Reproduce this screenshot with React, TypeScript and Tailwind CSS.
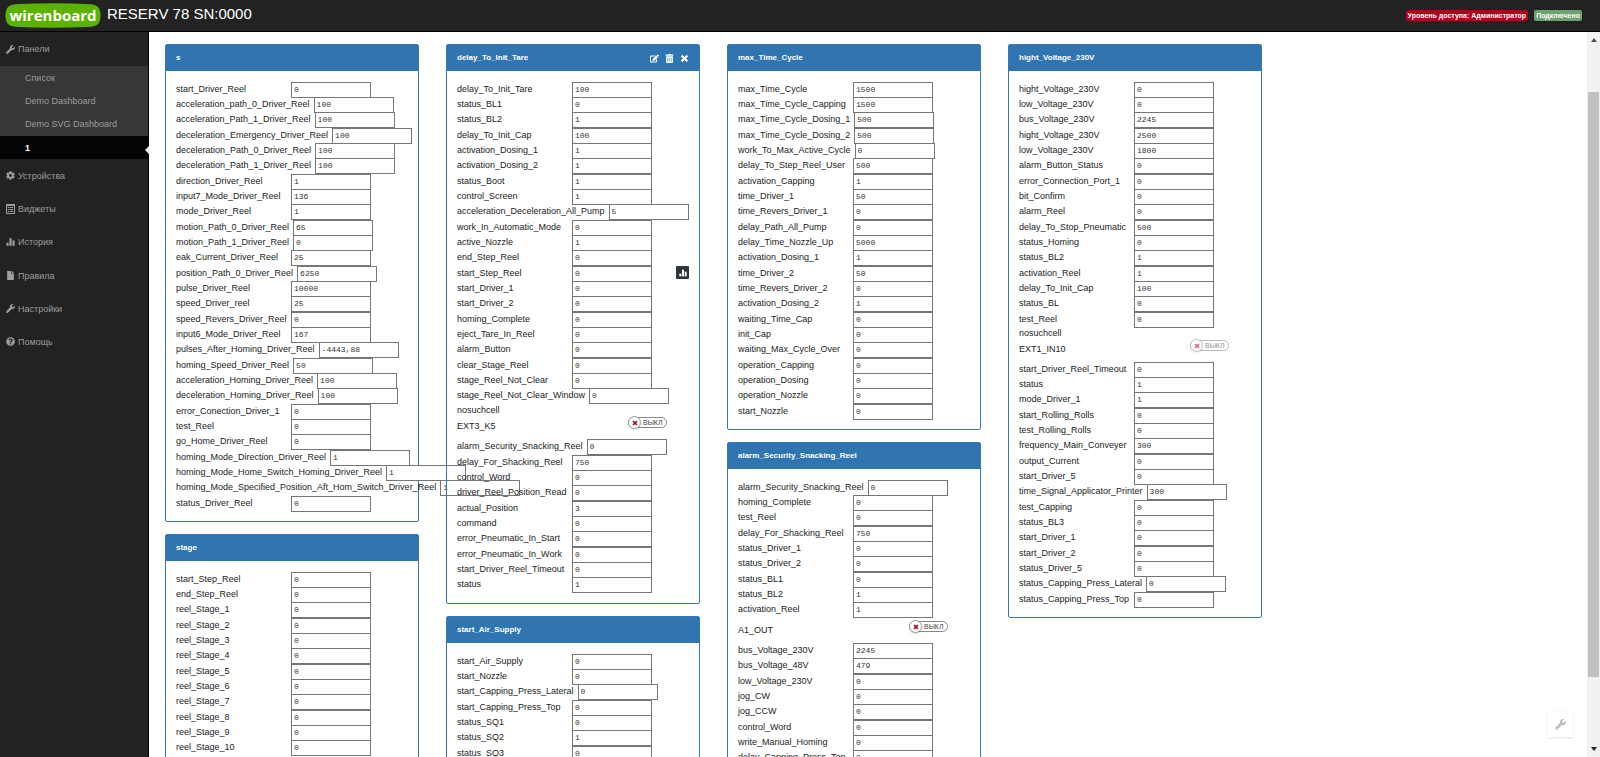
import React from 'react';
import {
  FaCog,
  FaEdit,
  FaFile,
  FaQuestionCircle,
  FaTimes,
  FaTrashAlt,
  FaWrench,
} from 'react-icons/fa';
import clsx from 'clsx';

type Cell =
  | { kind: 'value'; name: string; value: string; history?: boolean }
  | { kind: 'switch'; name: string; disabled?: boolean }
  | { kind: 'missing' };

interface Widget {
  title: string;
  cells: Cell[];
  active?: boolean;
}

const v = (name: string, value = '0'): Cell => ({ kind: 'value', name, value });
const sw = (name: string, disabled = false): Cell => ({ kind: 'switch', name, disabled });
const missing: Cell = { kind: 'missing' };

const columns: Widget[][] = [
  [
    {
      title: 's',
      cells: [
        v('start_Driver_Reel'),
        v('acceleration_path_0_Driver_Reel', '100'),
        v('acceleration_Path_1_Driver_Reel', '100'),
        v('deceleration_Emergency_Driver_Reel', '100'),
        v('deceleration_Path_0_Driver_Reel', '100'),
        v('deceleration_Path_1_Driver_Reel', '100'),
        v('direction_Driver_Reel', '1'),
        v('input7_Mode_Driver_Reel', '136'),
        v('mode_Driver_Reel', '1'),
        v('motion_Path_0_Driver_Reel', '65'),
        v('motion_Path_1_Driver_Reel'),
        v('eak_Current_Driver_Reel', '25'),
        v('position_Path_0_Driver_Reel', '6250'),
        v('pulse_Driver_Reel', '10000'),
        v('speed_Driver_reel', '25'),
        v('speed_Revers_Driver_Reel'),
        v('input6_Mode_Driver_Reel', '167'),
        v('pulses_After_Homing_Driver_Reel', '-4443,88'),
        v('homing_Speed_Driver_Reel', '50'),
        v('acceleration_Homing_Driver_Reel', '100'),
        v('deceleration_Homing_Driver_Reel', '100'),
        v('error_Conection_Driver_1'),
        v('test_Reel'),
        v('go_Home_Driver_Reel'),
        v('homing_Mode_Direction_Driver_Reel', '1'),
        v('homing_Mode_Home_Switch_Homing_Driver_Reel', '1'),
        v('homing_Mode_Specified_Position_Aft_Hom_Switch_Driver_Reel', '1'),
        v('status_Driver_Reel'),
      ],
    },
    {
      title: 'stage',
      cells: [
        v('start_Step_Reel'),
        v('end_Step_Reel'),
        v('reel_Stage_1'),
        v('reel_Stage_2'),
        v('reel_Stage_3'),
        v('reel_Stage_4'),
        v('reel_Stage_5'),
        v('reel_Stage_6'),
        v('reel_Stage_7'),
        v('reel_Stage_8'),
        v('reel_Stage_9'),
        v('reel_Stage_10'),
      ],
    },
  ],
  [
    {
      title: 'delay_To_Init_Tare',
      active: true,
      cells: [
        v('delay_To_Init_Tare', '100'),
        v('status_BL1'),
        v('status_BL2', '1'),
        v('delay_To_Init_Cap', '100'),
        v('activation_Dosing_1', '1'),
        v('activation_Dosing_2', '1'),
        v('status_Boot', '1'),
        v('control_Screen', '1'),
        v('acceleration_Deceleration_All_Pump', '5'),
        v('work_In_Automatic_Mode'),
        v('active_Nozzle', '1'),
        v('end_Step_Reel'),
        { kind: 'value', name: 'start_Step_Reel', value: '0', history: true },
        v('start_Driver_1'),
        v('start_Driver_2'),
        v('homing_Complete'),
        v('eject_Tare_In_Reel'),
        v('alarm_Button'),
        v('clear_Stage_Reel'),
        v('stage_Reel_Not_Clear'),
        v('stage_Reel_Not_Clear_Window'),
        missing,
        sw('EXT3_K5'),
        v('alarm_Security_Snacking_Reel'),
        v('delay_For_Shacking_Reel', '750'),
        v('control_Word'),
        v('driver_Reel_Position_Read'),
        v('actual_Position', '3'),
        v('command'),
        v('error_Pneumatic_In_Start'),
        v('error_Pneumatic_In_Work'),
        v('start_Driver_Reel_Timeout'),
        v('status', '1'),
      ],
    },
    {
      title: 'start_Air_Supply',
      cells: [
        v('start_Air_Supply'),
        v('start_Nozzle'),
        v('start_Capping_Press_Lateral'),
        v('start_Capping_Press_Top'),
        v('status_SQ1'),
        v('status_SQ2', '1'),
        v('status_SQ3'),
      ],
    },
  ],
  [
    {
      title: 'max_Time_Cycle',
      cells: [
        v('max_Time_Cycle', '1500'),
        v('max_Time_Cycle_Capping', '1500'),
        v('max_Time_Cycle_Dosing_1', '500'),
        v('max_Time_Cycle_Dosing_2', '500'),
        v('work_To_Max_Active_Cycle'),
        v('delay_To_Step_Reel_User', '500'),
        v('activation_Capping', '1'),
        v('time_Driver_1', '50'),
        v('time_Revers_Driver_1'),
        v('delay_Path_All_Pump'),
        v('delay_Time_Nozzle_Up', '5000'),
        v('activation_Dosing_1', '1'),
        v('time_Driver_2', '50'),
        v('time_Revers_Driver_2'),
        v('activation_Dosing_2', '1'),
        v('waiting_Time_Cap'),
        v('init_Cap'),
        v('waiting_Max_Cycle_Over'),
        v('operation_Capping'),
        v('operation_Dosing'),
        v('operation_Nozzle'),
        v('start_Nozzle'),
      ],
    },
    {
      title: 'alarm_Security_Snacking_Reel',
      cells: [
        v('alarm_Security_Snacking_Reel'),
        v('homing_Complete'),
        v('test_Reel'),
        v('delay_For_Shacking_Reel', '750'),
        v('status_Driver_1'),
        v('status_Driver_2'),
        v('status_BL1'),
        v('status_BL2', '1'),
        v('activation_Reel', '1'),
        sw('A1_OUT'),
        v('bus_Voltage_230V', '2245'),
        v('bus_Voltage_48V', '479'),
        v('low_Voltage_230V'),
        v('jog_CW'),
        v('jog_CCW'),
        v('control_Word'),
        v('write_Manual_Homing'),
        v('delay_Capping_Press_Top'),
      ],
    },
  ],
  [
    {
      title: 'hight_Voltage_230V',
      cells: [
        v('hight_Voltage_230V'),
        v('low_Voltage_230V'),
        v('bus_Voltage_230V', '2245'),
        v('hight_Voltage_230V', '2500'),
        v('low_Voltage_230V', '1800'),
        v('alarm_Button_Status'),
        v('error_Connection_Port_1'),
        v('bit_Confirm'),
        v('alarm_Reel'),
        v('delay_To_Stop_Pneumatic', '500'),
        v('status_Homing'),
        v('status_BL2', '1'),
        v('activation_Reel', '1'),
        v('delay_To_Init_Cap', '100'),
        v('status_BL'),
        v('test_Reel'),
        missing,
        sw('EXT1_IN10', true),
        v('start_Driver_Reel_Timeout'),
        v('status', '1'),
        v('mode_Driver_1', '1'),
        v('start_Rolling_Rolls'),
        v('test_Rolling_Rolls'),
        v('frequency_Main_Conveyer', '300'),
        v('output_Current'),
        v('start_Driver_5'),
        v('time_Signal_Applicator_Printer', '300'),
        v('test_Capping'),
        v('status_BL3'),
        v('start_Driver_1'),
        v('start_Driver_2'),
        v('status_Driver_5'),
        v('status_Capping_Press_Lateral'),
        v('status_Capping_Press_Top'),
      ],
    },
  ],
];

const dashboards = ['Список', 'Demo Dashboard', 'Demo SVG Dashboard', '1'];

function StatsIcon({ className }: { className?: string }) {
  return (
    <svg viewBox="0 0 12 12" fill="currentColor" className={className} aria-hidden="true">
      <rect x="0.5" y="7" width="3" height="4" />
      <rect x="4.5" y="1" width="3" height="10" />
      <rect x="8.5" y="4" width="3" height="7" />
    </svg>
  );
}

function ListIcon({ className }: { className?: string }) {
  return (
    <svg viewBox="0 0 18 20" fill="currentColor" className={className} aria-hidden="true">
      <path
        fillRule="evenodd"
        d="M1 0H17Q18 0 18 1V19Q18 20 17 20H1Q0 20 0 19V1Q0 0 1 0ZM2 4V18H16V4Z"
      />
      <path d="M3.5 6H6V8H3.5ZM7 6H14.5V8H7ZM3.5 10H6V12H3.5ZM7 10H14.5V12H7ZM3.5 14H6V16H3.5ZM7 14H14.5V16H7Z" />
    </svg>
  );
}

const menu = [
  { label: 'Устройства', icon: <FaCog /> },
  { label: 'Виджеты', icon: <ListIcon className="size-[10px]" /> },
  { label: 'История', icon: <StatsIcon className="size-[10px]" /> },
  { label: 'Правила', icon: <FaFile /> },
  { label: 'Настройки', icon: <FaWrench /> },
  { label: 'Помощь', icon: <FaQuestionCircle /> },
];

function Logo() {
  return (
    <a href="#" className="relative flex h-[25px] w-24 items-center justify-center">
      <svg viewBox="0 0 96 25" className="absolute inset-0 size-full" aria-hidden="true">
        <path
          d="M10 1.2Q48 -.8 86 1.2Q94 1.8 95 8Q96 12.5 95 17Q94 23 86 23.8Q48 25.6 10 23.8Q2 23 1 17Q0 12.5 1 8Q2 1.8 10 1.2Z"
          fill="#5cb200"
        />
      </svg>
      <span className="relative pb-px font-['Open_Sans',sans-serif] text-[15px] leading-none font-bold text-white">
        wirenboard
      </span>
    </a>
  );
}

function Header() {
  return (
    <header className="flex h-8 shrink-0 items-center border-b border-black bg-[#222] pr-[18px] pl-[5px]">
      <Logo />
      <h1 className="ml-[6px] pb-1 text-[15px] leading-5 text-white">RESERV 78 SN:0000</h1>
      <div className="ml-auto flex gap-[6px] text-[7px] leading-[11px] font-bold text-white">
        <span className="rounded-xs bg-[#b00020] px-[2px]">Уровень доступа: Администратор</span>
        <span className="rounded-xs bg-[#6fa06f] px-[2px]">Подключено</span>
      </div>
    </header>
  );
}

function Sidebar() {
  return (
    <nav className="w-[149px] shrink-0 border-r border-black bg-[#222] text-[9px] leading-3 text-[#9d9d9d]">
      <a href="#" className="flex h-[34px] items-center gap-[3px] pl-[6px]">
        <FaWrench className="size-[9px]" />
        Панели
      </a>
      <ul className="bg-[#373737]">
        {dashboards.map((name) => (
          <li key={name} className="nth-[3n]:pb-px">
            <a
              href="#"
              className={clsx(
                'relative flex h-[23px] items-center pl-[25px]',
                name === '1' && 'bg-[#040404] font-bold text-white',
              )}
            >
              {name}
              {name === '1' && (
                <span className="absolute top-[10px] -right-px border-y-4 border-r-4 border-y-transparent border-r-[#eef4fb]" />
              )}
            </a>
          </li>
        ))}
      </ul>
      <ul>
        {menu.map((item) => (
          <li key={item.label} className="nth-[3n]:pb-px">
            <a href="#" className="flex h-[33px] items-center gap-[3px] pl-[6px]">
              <span className="flex w-[9px] justify-center">{item.icon}</span>
              {item.label}
            </a>
          </li>
        ))}
      </ul>
    </nav>
  );
}

function Cross({ className }: { className?: string }) {
  return <FaTimes className={className} stroke="currentColor" strokeWidth={50} />;
}

function Switch({ id, disabled }: { id: string; disabled?: boolean }) {
  return (
    <button
      id={id}
      role="switch"
      aria-checked="false"
      disabled={disabled}
      className={clsx(
        'mt-[3px] mr-[22px] ml-auto flex h-[11px] w-[39px] items-center rounded-full border border-[#888] bg-white text-[7px] leading-none text-[#444]',
        disabled && 'opacity-60',
      )}
    >
      <span className="-ml-px flex size-[13px] shrink-0 items-center justify-center rounded-full border border-[#999] bg-white shadow">
        <Cross className="size-[6px] text-[#b00020]" />
      </span>
      <span className="ml-[2px]">ВЫКЛ</span>
    </button>
  );
}

function CellRow({ cell, id }: { cell: Cell; id: string }) {
  if (cell.kind === 'missing') {
    return <div className="h-[10px] leading-3">nosuchcell</div>;
  }
  if (cell.kind === 'switch') {
    return (
      <div className="flex h-[25px] items-start">
        <label htmlFor={id} className="leading-6">
          {cell.name}
        </label>
        <Switch id={id} disabled={cell.disabled} />
      </div>
    );
  }
  return (
    <div className="flex nth-[3n]:pb-px">
      <label htmlFor={id} className="min-w-[115px] shrink-0 pr-1 leading-[15px] whitespace-nowrap">
        {cell.name}
      </label>
      <input
        id={id}
        type="text"
        defaultValue={cell.value}
        className="-mb-px h-4 w-20 shrink-0 border border-[#767676] bg-white px-[2px] pb-[2px] font-['Liberation_Mono',monospace] text-[8px] text-[#333]"
      />
      {cell.history && (
        <button
          aria-label="История"
          className="ml-auto flex size-[13px] items-center justify-center rounded-[1px] bg-[#2d343c] text-white"
        >
          <StatsIcon className="size-2" />
        </button>
      )}
    </div>
  );
}

function Panel({ widget, id }: { widget: Widget; id: string }) {
  return (
    <section className="rounded-[2px] border border-[#3a78b5]">
      <div className="flex h-[26px] items-center bg-[#3075b0] px-[10px] text-[8px] font-bold text-white">
        <h2>{widget.title}</h2>
        {widget.active && (
          <div className="ml-auto flex gap-[6px] text-[9px]">
            <button aria-label="Изменить"><FaEdit /></button>
            <button aria-label="Удалить"><FaTrashAlt /></button>
            <button aria-label="Закрыть"><Cross /></button>
          </div>
        )}
      </div>
      <div className="px-[10px] pt-[11px] pb-[10px]">
        {widget.cells.map((cell, i) => (
          <CellRow key={i} cell={cell} id={`${id}-${i}`} />
        ))}
      </div>
    </section>
  );
}

function ScrollBar() {
  return (
    <div className="flex w-[13px] shrink-0 flex-col items-center bg-[#f1f1f1]">
      <span className="my-[6px] border-x-3 border-b-4 border-x-transparent border-b-[#505050]" />
      <div className="flex w-full flex-1 flex-col px-px">
        <div className="flex-[44]" />
        <div className="flex-[584] bg-[#c1c1c1]" />
        <div className="flex-[64]" />
      </div>
      <span className="my-[6px] border-x-3 border-t-4 border-x-transparent border-t-[#222]" />
    </div>
  );
}

export default function App() {
  return (
    <div className="flex h-screen flex-col overflow-hidden bg-white font-['Liberation_Sans',Arial,sans-serif] text-[9px] text-[#222]">
      <Header />
      <div className="flex min-h-0 flex-1">
        <Sidebar />
        <main className="min-w-0 flex-1 overflow-hidden pt-3 pr-11 pl-4">
          <div className="grid grid-cols-5 items-start gap-[27px]">
            {columns.map((widgets, c) => (
              <div key={c} className="flex min-w-0 flex-col gap-3">
                {widgets.map((widget, w) => (
                  <Panel key={w} widget={widget} id={`cell-${c}-${w}`} />
                ))}
              </div>
            ))}
          </div>
        </main>
        <ScrollBar />
      </div>
      <button
        aria-label="Настройки"
        className="fixed right-[27px] bottom-5 flex size-[25px] items-center justify-center bg-white text-[#bbb] shadow"
      >
        <FaWrench className="size-[11px]" />
      </button>
    </div>
  );
}
